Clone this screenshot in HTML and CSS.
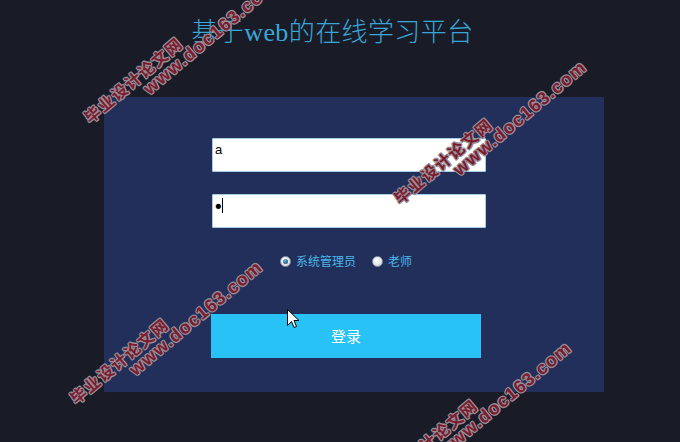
FILE: index.html
```html
<!DOCTYPE html>
<html lang="zh">
<head>
<meta charset="utf-8">
<title>基于web的在线学习平台</title>
<link rel="stylesheet" href="styles.css">
</head>
<body>
<div class="page">
  <h1 class="title">基于web的在线学习平台</h1>
  <div class="panel">
    <form class="form">
      <input class="field" type="text" value="a">
      <div class="field-wrap">
        <input class="field pass" type="password" value="a">
        <span class="caret"></span>
      </div>
      <div class="roles">
        <label class="role"><span class="radio checked"></span>系统管理员</label>
        <label class="role"><span class="radio"></span>老师</label>
      </div>
      <button class="login" type="button">登录</button>
    </form>
  </div>

  <div class="wm wm1"><div class="wm-cn">毕业设计论文网</div><div class="wm-en">www.doc163.com</div></div>
  <div class="wm wm2"><div class="wm-cn">毕业设计论文网</div><div class="wm-en">www.doc163.com</div></div>
  <div class="wm wm3"><div class="wm-cn">毕业设计论文网</div><div class="wm-en">www.doc163.com</div></div>
  <div class="wm wm4"><div class="wm-cn">毕业设计论文网</div><div class="wm-en">www.doc163.com</div></div>

  <svg class="cursor" width="13" height="20" viewBox="0 0 13 20">
    <path d="M0.5 0.5 L0.5 16.5 L4.5 12.5 L7 18.5 L9.5 17.5 L7 11.5 L12 11.5 Z" fill="#fff" stroke="#000" stroke-width="1"/>
  </svg>
</div>
</body>
</html>
```
FILE: styles.css
```css
html, body {
  margin: 0;
  padding: 0;
  background: #191c27;
}
.page {
  position: relative;
  width: 680px;
  height: 442px;
  overflow: hidden;
  background: #191c27;
  padding-top: 16px;
  box-sizing: border-box;
}
.title {
  margin: 0;
  padding-right: 15px;
  text-align: center;
  font-family: "Liberation Serif", "Noto Sans CJK SC", serif;
  font-weight: 300;
  font-size: 26px;
  letter-spacing: 0.4px;
  line-height: 34px;
  color: #3aa6d8;
}
.panel {
  margin: 47px 0 0 104px;
  width: 500px;
  height: 295px;
  background: #212f5a;
  padding: 41px 0 0 107px;
  box-sizing: border-box;
}
.form {
  display: flex;
  flex-direction: column;
  width: 275px;
  margin: 0;
}
.field {
  display: block;
  box-sizing: border-box;
  width: 274px;
  height: 34px;
  margin: 0 0 0 1px;
  padding: 0 2px 12px;
  border: 1px solid #a6cce6;
  border-radius: 1px;
  background: #fff;
  font-family: "Liberation Sans", Arial, sans-serif;
  font-size: 13px;
  color: #000;
  outline: none;
}
.field.pass {
  font-family: "DejaVu Sans", sans-serif;
  font-size: 18px;
  padding: 0 0 10px 0;
}
.field-wrap {
  position: relative;
  margin-top: 22px;
}
.caret {
  position: absolute;
  left: 11px;
  top: 4px;
  width: 1px;
  height: 15px;
  background: #000;
}
.roles {
  display: flex;
  justify-content: center;
  align-items: center;
  gap: 16px;
  width: 270px;
  margin-top: 26px;
  height: 14px;
  font-family: "Noto Sans CJK SC", sans-serif;
  font-size: 12px;
  color: #4cb8ec;
}
.role {
  display: flex;
  align-items: center;
  gap: 5px;
  line-height: 14px;
}
.radio {
  display: inline-block;
  width: 11px;
  height: 11px;
  border-radius: 50%;
  box-sizing: border-box;
  border: 1px solid #8e9aa6;
  background: radial-gradient(circle at 40% 35%, #ffffff 0%, #e4e8ec 55%, #b9c2cb 100%);
  position: relative;
}
.radio.checked::after {
  content: "";
  position: absolute;
  left: 2px;
  top: 2px;
  width: 5px;
  height: 5px;
  border-radius: 50%;
  background: radial-gradient(circle at 40% 35%, #6fb4d8 0%, #1f5f86 70%, #173f5c 100%);
}
.login {
  margin-top: 46px;
  width: 270px;
  height: 44px;
  border: none;
  background: #28c2f6;
  color: #fff;
  font-family: "Noto Sans CJK SC", sans-serif;
  font-size: 15px;
  padding: 0 0 2px;
  cursor: pointer;
}
.wm {
  position: absolute;
  transform-origin: 0 0;
  transform: rotate(-40deg);
  font-weight: bold;
  color: #7a1c2e;
  text-shadow: 1px 0 #9d919c, -1px 0 #9d919c, 0 1px #9d919c, 0 -1px #9d919c,
               1px 1px #8a7f8a, -1px -1px #8a7f8a, 1px -1px #8a7f8a, -1px 1px #8a7f8a;
  white-space: nowrap;
  pointer-events: none;
  line-height: 18px;
}
.wm-cn {
  font-family: "Noto Sans CJK SC", sans-serif;
  font-size: 16px;
  letter-spacing: 1.5px;
}
.wm-en {
  font-family: "Liberation Sans", Arial, sans-serif;
  font-size: 18px;
  padding-left: 64px;
  margin-top: -1px;
  letter-spacing: 1.2px;
}
.wm1 { left: 80px; top: 112px; }
.wm2 { left: 390px; top: 193px; }
.wm3 { left: 66px; top: 393px; }
.wm4 { left: 375px; top: 474px; }
.cursor {
  position: absolute;
  left: 287px;
  top: 309px;
}
```
